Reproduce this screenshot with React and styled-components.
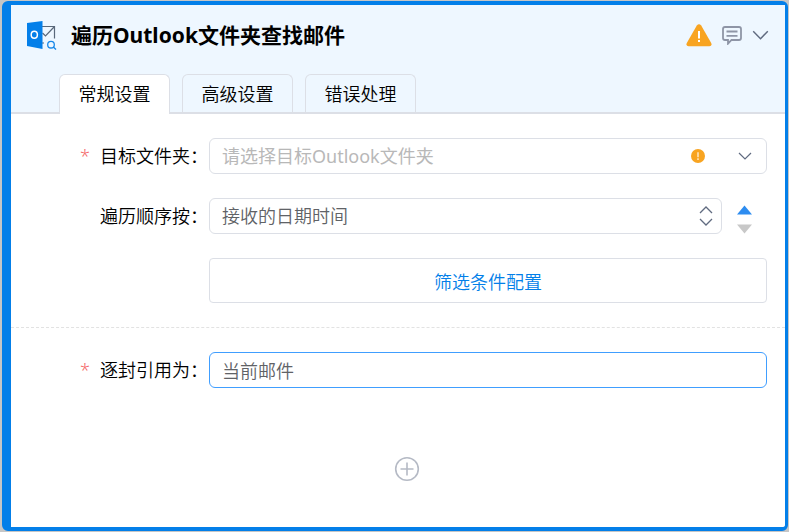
import React, { useState } from 'react';
import styled, { createGlobalStyle } from 'styled-components';

const GlobalStyle = createGlobalStyle`
    *,
    *::before,
    *::after {
        box-sizing: border-box;
    }

    body {
        margin: 0;
        background-color: #c6c6c6;
        font-family: 'Noto Sans', 'Noto Sans CJK SC', sans-serif;
        font-size: 18px;
        font-weight: 350;
        color: #000;
    }

    button,
    input,
    select {
        font: inherit;
        margin: 0;
    }
`;

const Page = styled.div`
    display: flex;
    min-height: 100vh;
    padding: 1px 1px 1px 2px;
`;

const Card = styled.section`
    flex: 1;
    min-width: 0;
    border: 4px solid #037fe9;
    border-left-width: 9px;
    border-right-width: 3px;
    border-radius: 6px;
    background-color: #fff;
`;

const Header = styled.header`
    background-color: #eef7ff;
`;

const TitleBar = styled.div`
    display: flex;
    align-items: center;
    height: 60px;
    padding: 0 16px;
`;

const Title = styled.h1`
    flex: 1;
    margin: 0 0 0 14px;
    font-size: 21px;
    font-weight: 700;
    line-height: 32px;
`;

const Actions = styled.div`
    display: flex;
    align-items: center;
    gap: 10px;
`;

const IconButton = styled.button`
    display: flex;
    padding: 0;
    border: 0;
    background: none;
    cursor: pointer;
`;

const Tabs = styled.div`
    display: flex;
    gap: 12px;
    padding: 9px 48px 0;
    border-bottom: 2px solid #dcdfe6;
`;

const Tab = styled.button`
    width: 111px;
    height: ${({ $active }) => ($active ? 40 : 38)}px;
    margin-bottom: ${({ $active }) => ($active ? -2 : 0)}px;
    padding: 2px 0 ${({ $active }) => ($active ? 2 : 0)}px;
    border: 1px solid #dcdfe6;
    border-bottom: 0;
    border-radius: 6px 6px 0 0;
    background-color: ${({ $active }) => ($active ? '#fff' : 'transparent')};
    color: #000;
    line-height: 35px;
    white-space: nowrap;
    cursor: pointer;
`;

const Group = styled.div`
    display: grid;
    gap: 24px;
    padding: 24px 18px 24px 0;
`;

const Divider = styled.hr`
    margin: 0;
    border: 0;
    border-top: 1px dashed #e2e2e2;
`;

const Row = styled.div`
    display: grid;
    grid-template-columns: 198px 1fr auto;
    align-items: center;
`;

const Label = styled.label`
    display: flex;
    justify-content: flex-end;
    padding-right: 1px;
    line-height: 36px;
    white-space: nowrap;
`;

const Required = styled.span`
    margin-right: 10px;
    color: #f56c6c;
`;

const Field = styled.div`
    position: relative;
    min-width: 0;
`;

const boxColor = ({ $focused }) => ($focused ? '#409eff' : '#dcdfe6');

const Input = styled.input`
    display: block;
    width: 100%;
    height: 36px;
    padding: 0 12px;
    border: 1px solid ${boxColor};
    border-radius: 6px;
    outline: 0;
    background-color: #fff;
    color: #606266;
`;

const Select = styled.select`
    display: block;
    width: 100%;
    height: 36px;
    padding: 0 12px;
    border: 1px solid #dcdfe6;
    border-radius: 6px;
    outline: 0;
    appearance: none;
    background-color: #fff;
    color: ${({ $empty }) => ($empty ? '#b8b8b8' : '#606266')};
    font-weight: ${({ $empty }) => ($empty ? 400 : 350)};
`;

const Suffix = styled.span`
    position: absolute;
    top: 0;
    right: ${({ $right }) => $right}px;
    display: flex;
    align-items: center;
    height: 36px;
    gap: 33px;
    pointer-events: none;
`;

const SortButtons = styled.div`
    display: grid;
    gap: 9px;
    margin: 0 15px;
    padding-top: 6px;
`;

const FilterButton = styled.button`
    grid-column: 2;
    height: 45px;
    border: 1px solid #dcdfe6;
    border-radius: 4px;
    background-color: #fff;
    color: #037fe9;
    cursor: pointer;
`;

const AddArea = styled.div`
    display: flex;
    justify-content: center;
    padding: 44px 0 44px 18px;
`;

const OutlookIcon = () => (
    <svg width='30' height='30' viewBox='0 0 30 30' fill='none'>
        <path d='M15 6.5H27.5V18.5M15.5 13L18.5 16L27 7' stroke='#59687a' strokeWidth='1.2' />
        <path d='M15 23H17' stroke='#59687a' strokeWidth='1' />
        <path d='M0 3L15.5 1V29L0 26Z' fill='#037fe9' />
        <ellipse cx='7.3' cy='14.7' rx='3.1' ry='3.5' stroke='#fff' strokeWidth='1.5' />
        <circle cx='24' cy='24.7' r='3.3' stroke='#1687e8' strokeWidth='1.3' />
        <path d='M26.3 27L29 29.5' stroke='#1687e8' strokeWidth='1.4' />
    </svg>
);

const WarningIcon = () => (
    <svg width='26' height='23' viewBox='0 0 26 23'>
        <path
            d='M10.8 1.6Q13 -1.2 15.2 1.6L25.2 19Q26.4 22 23.4 22.3H2.6Q-0.4 22 0.8 19Z'
            fill='#f8a421'
        />
        <path d='M13 7V14.5M13 16V18' stroke='#fff' strokeWidth='2' />
    </svg>
);

const CommentIcon = () => (
    <svg width='20' height='20' viewBox='0 0 20 20' fill='none' stroke='#8e95a6' strokeWidth='1.8'>
        <path d='M3 2H17Q19 2 19 4V13Q19 15 17 15H9.5L6 18.7V15H3Q1 15 1 13V4Q1 2 3 2Z' />
        <path d='M4.5 6.5H15.5M4.5 10.8H15.5' />
    </svg>
);

const ChevronIcon = ({ width = 14, height = 8, up }) => (
    <svg width={width} height={height} viewBox='0 0 14 8' fill='none'>
        <path
            d={up ? 'M1 7L7 1L13 7' : 'M1 1L7 7L13 1'}
            stroke='#606b80'
            strokeWidth='1.2'
        />
    </svg>
);

const AlertIcon = () => (
    <svg width='14' height='14' viewBox='0 0 14 14'>
        <circle cx='7' cy='7' r='7' fill='#f8a421' />
        <path d='M7 3.2V8.3M7 9.3V11' stroke='#fff' strokeOpacity='0.7' strokeWidth='1.6' />
    </svg>
);

const UpDownIcon = () => (
    <svg width='14' height='20' viewBox='0 0 14 20' fill='none' stroke='#606b80' strokeWidth='1.3'>
        <path d='M1 7L7 1L13 7M1 13L7 19L13 13' />
    </svg>
);

const ArrowIcon = ({ down }) => (
    <svg width='15' height='10' viewBox='0 0 15 10'>
        <path d={down ? 'M0 0.5H15L7.5 9.5Z' : 'M0 9.5H15L7.5 0.5Z'} fill={down ? '#c8c8c8' : '#2d8cf0'} />
    </svg>
);

const PlusIcon = () => (
    <svg width='26' height='26' viewBox='0 0 26 26' fill='none' stroke='#b5bac5' strokeWidth='1.6'>
        <circle cx='13' cy='13' r='11.3' />
        <path d='M6.5 13H19.5M13 6.5V19.5' />
    </svg>
);

const tabs = ['常规设置', '高级设置', '错误处理'];

const App = () => {
    const [tab, setTab] = useState(tabs[0]);
    const [folder, setFolder] = useState('');
    const [name, setName] = useState('当前邮件');

    return (
        <>
            <GlobalStyle />
            <Page>
                <Card>
                    <Header>
                        <TitleBar>
                            <OutlookIcon />
                            <Title>遍历Outlook文件夹查找邮件</Title>
                            <Actions>
                                <IconButton aria-label='警告'>
                                    <WarningIcon />
                                </IconButton>
                                <IconButton aria-label='备注'>
                                    <CommentIcon />
                                </IconButton>
                                <IconButton aria-label='收起'>
                                    <ChevronIcon width={17} height={10} />
                                </IconButton>
                            </Actions>
                        </TitleBar>
                        <Tabs role='tablist'>
                            {tabs.map((item) => (
                                <Tab
                                    key={item}
                                    role='tab'
                                    aria-selected={item === tab}
                                    $active={item === tab}
                                    onClick={() => setTab(item)}
                                >
                                    {item}
                                </Tab>
                            ))}
                        </Tabs>
                    </Header>
                    <Group>
                        <Row>
                            <Label htmlFor='folder'>
                                <Required>*</Required>目标文件夹：
                            </Label>
                            <Field>
                                <Select
                                    id='folder'
                                    value={folder}
                                    $empty={!folder}
                                    onChange={(ev) => setFolder(ev.target.value)}
                                >
                                    <option value=''>请选择目标Outlook文件夹</option>
                                </Select>
                                <Suffix $right={15}>
                                    <AlertIcon />
                                    <ChevronIcon />
                                </Suffix>
                            </Field>
                        </Row>
                        <Row>
                            <Label htmlFor='order'>遍历顺序按：</Label>
                            <Field>
                                <Select id='order'>
                                    <option>接收的日期时间</option>
                                </Select>
                                <Suffix $right={9}>
                                    <UpDownIcon />
                                </Suffix>
                            </Field>
                            <SortButtons>
                                <IconButton aria-label='升序'>
                                    <ArrowIcon />
                                </IconButton>
                                <IconButton aria-label='降序'>
                                    <ArrowIcon down />
                                </IconButton>
                            </SortButtons>
                        </Row>
                        <Row>
                            <FilterButton>筛选条件配置</FilterButton>
                        </Row>
                    </Group>
                    <Divider />
                    <Group>
                        <Row>
                            <Label htmlFor='name'>
                                <Required>*</Required>逐封引用为：
                            </Label>
                            <Field>
                                <Input
                                    id='name'
                                    value={name}
                                    $focused
                                    onChange={(ev) => setName(ev.target.value)}
                                />
                            </Field>
                        </Row>
                    </Group>
                    <AddArea>
                        <IconButton aria-label='添加'>
                            <PlusIcon />
                        </IconButton>
                    </AddArea>
                </Card>
            </Page>
        </>
    );
};

export default App;
